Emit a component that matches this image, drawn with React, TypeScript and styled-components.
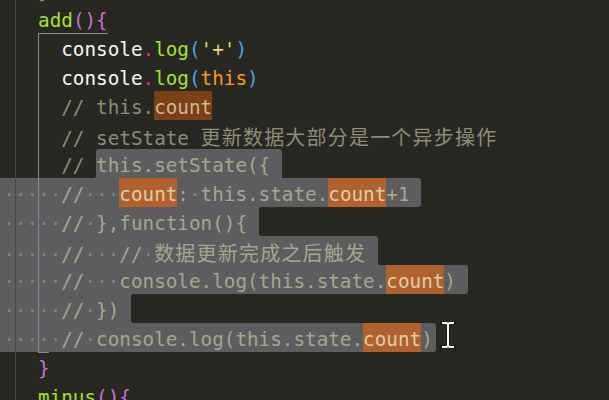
import React from "react";
import styled, { createGlobalStyle, css } from "styled-components";

const Global = createGlobalStyle`
  html, body { margin: 0; padding: 0; background: #272822; }
  body { width: 609px; height: 400px; overflow: hidden; }
`;

const SEL = "#5b5d5f";
const R = 3;

const Editor = styled.div`
  position: relative;
  width: 609px;
  height: 400px;
  overflow: hidden;
  background: #272822;
`;

const Code = styled.div`
  display: flex;
  flex-direction: column;
  margin-top: -25px;
  margin-left: -8.4px;
  font-family: "DejaVu Sans Mono", "Liberation Mono", monospace;
  font-size: 19.3px;
  color: #f8f8f2;
`;

const Line = styled.div`
  height: 29px;
  line-height: 33px;
  white-space: pre;
`;

const Tok = styled.span<{ $c: string }>`
  color: ${(p) => p.$c};
`;

type Corners = { tl?: boolean; tr?: boolean; br?: boolean; bl?: boolean; ctr?: boolean; cbr?: boolean; cbl?: boolean };

const fillet = (side: "left" | "right", v: "top" | "bottom") => css`
  content: "";
  position: absolute;
  ${v}: 0;
  ${side}: -${R}px;
  width: ${R}px;
  height: ${R}px;
  background: radial-gradient(
    circle at ${side === "right" ? "100%" : "0%"} ${v === "top" ? "100%" : "0%"},
    transparent ${R}px,
    ${SEL} ${R}px
  );
`;

const Sel = styled.span<{ $k: Corners; $end?: string }>`
  position: relative;
  display: inline-block;
  height: 29px;
  vertical-align: top;
  background: ${SEL};
  color: #a8a58d;
  padding-right: ${(p) => p.$end ?? "1ch"};
  border-top-left-radius: ${(p) => (p.$k.tl ? R : 0)}px;
  border-top-right-radius: ${(p) => (p.$k.tr ? R : 0)}px;
  border-bottom-right-radius: ${(p) => (p.$k.br ? R : 0)}px;
  border-bottom-left-radius: ${(p) => (p.$k.bl ? R : 0)}px;
  &::before {
    ${(p) => (p.$k.ctr ? fillet("right", "top") : p.$k.cbl ? fillet("left", "bottom") : "")}
  }
  &::after {
    ${(p) => (p.$k.cbr ? fillet("right", "bottom") : "")}
  }
`;

const Hit = styled.span<{ $sel?: boolean }>`
  display: inline-block;
  height: 29px;
  vertical-align: top;
  background: ${(p) => (p.$sel ? "#b1612d" : "#7b4116")};
  color: ${(p) => (p.$sel ? "#dccfae" : "#cbb99a")};
`;

const Ws = styled.span`
  color: #808283;
`;

const Cjk = styled.span`
  font-family: "Noto Sans CJK SC", "Noto Sans", sans-serif;
  font-size: 20px;
  letter-spacing: 1.2px;
`;

const Guide = styled.div<{ $x: number; $y: number; $h: number; $c: string }>`
  position: absolute;
  left: ${(p) => p.$x}px;
  top: ${(p) => p.$y}px;
  width: 1px;
  height: ${(p) => p.$h}px;
  background: ${(p) => p.$c};
`;

const HGuide = styled.div<{ $x: number; $y: number; $w: number; $c: string }>`
  position: absolute;
  left: ${(p) => p.$x}px;
  top: ${(p) => p.$y}px;
  height: 1px;
  width: ${(p) => p.$w}px;
  background: ${(p) => p.$c};
`;

const Cursor = styled.svg`
  position: absolute;
  left: 440px;
  top: 321px;
`;

const C = {
  txt: "#f8f8f2",
  green: "#a6e22e",
  dot: "#f92672",
  mag: "#cc6fd8",
  blue: "#4aa5e0",
  yel: "#e6db74",
  org: "#fd971f",
  com: "#8f8c74",
};

const D = (n: number) => <Ws>{"·".repeat(n)}</Ws>;

const ACTIVE = "#a07a94";

export default function App() {
  return (
    <>
      <Global />
      <Editor>
        <Code>
          <Line>
            {"    "}
            <Tok $c={C.mag}>{"}"}</Tok>
          </Line>
          <Line>
            {"    "}
            <Tok $c={C.green}>add</Tok>
            <Tok $c={C.mag}>{"(){"}</Tok>
          </Line>
          <Line>
            {"      "}console<Tok $c={C.dot}>.</Tok>
            <Tok $c={C.green}>log</Tok>
            <Tok $c={C.blue}>(</Tok>
            <Tok $c={C.yel}>'+'</Tok>
            <Tok $c={C.blue}>)</Tok>
          </Line>
          <Line>
            {"      "}console<Tok $c={C.dot}>.</Tok>
            <Tok $c={C.green}>log</Tok>
            <Tok $c={C.blue}>(</Tok>
            <Tok $c={C.org}>this</Tok>
            <Tok $c={C.blue}>)</Tok>
          </Line>
          <Line>
            <Tok $c={C.com}>
              {"      // this."}
              <Hit>count</Hit>
            </Tok>
          </Line>
          <Line>
            <Tok $c={C.com}>
              {"      // setState "}
              <Cjk>更新数据大部分是一个异步操作</Cjk>
            </Tok>
          </Line>
          <Line>
            <Tok $c={C.com}>{"      // "}</Tok>
            <Sel $k={{ tl: true, tr: true, cbl: true }}>{"this.setState({"}</Sel>
          </Line>
          <Line>
            <Sel $k={{ tr: true, br: true }}>
              {D(6)}//{D(3)}
              <Hit $sel>count</Hit>:{D(1)}this.state.<Hit $sel>count</Hit>+1
            </Sel>
          </Line>
          <Line>
            <Sel $k={{ ctr: true, cbr: true }}>
              {D(6)}//{D(1)}{"},function(){"}
            </Sel>
          </Line>
          <Line>
            <Sel $k={{ tr: true, cbr: true }}>
              {D(6)}//{D(3)}//{D(1)}
              <Cjk>数据更新完成之后触发</Cjk>
            </Sel>
          </Line>
          <Line>
            <Sel $k={{ tr: true, br: true }}>
              {D(6)}//{D(3)}console.log(this.state.<Hit $sel>count</Hit>)
            </Sel>
          </Line>
          <Line>
            <Sel $k={{ ctr: true, cbr: true }}>
              {D(6)}//{D(1)}{"})"}
            </Sel>
          </Line>
          <Line>
            <Sel $k={{ tr: true, br: true }} $end="3px">
              {D(6)}//{D(1)}console.log(this.state.<Hit $sel>count</Hit>)
            </Sel>
          </Line>
          <Line>
            {"    "}
            <Tok $c={C.mag}>{"}"}</Tok>
          </Line>
          <Line>
            {"    "}
            <Tok $c={C.green}>minus</Tok>
            <Tok $c={C.mag}>{"(){"}</Tok>
          </Line>
        </Code>

        <Guide $x={15} $y={0} $h={400} $c="#47473f" />
        <Guide $x={38} $y={33} $h={320} $c={ACTIVE} />
        <HGuide $x={38} $y={33} $w={70} $c="#8e8a86" />
        <HGuide $x={38} $y={352} $w={11} $c={ACTIVE} />

        <Cursor width="16" height="28" viewBox="0 0 16 28">
          <path
            d="M2 2 H6 Q8 2 8 4 Q8 2 10 2 H14 M8 4 V24 M2 26 H6 Q8 26 8 24 Q8 26 10 26 H14"
            fill="none"
            stroke="#1a1a1a"
            strokeWidth="4"
            strokeLinecap="square"
          />
          <path
            d="M2 2 H6 Q8 2 8 4 Q8 2 10 2 H14 M8 4 V24 M2 26 H6 Q8 26 8 24 Q8 26 10 26 H14"
            fill="none"
            stroke="#f4f4f4"
            strokeWidth="2"
          />
        </Cursor>
      </Editor>
    </>
  );
}
